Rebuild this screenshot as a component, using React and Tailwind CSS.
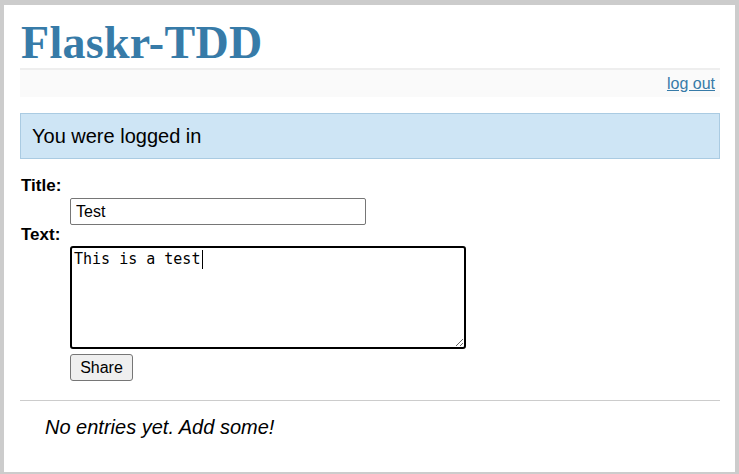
import { useState } from "react";

export default function App() {
  const [title, setTitle] = useState("Test");
  const [text, setText] = useState("This is a test");

  return (
    <div className="h-[474px] w-[739px] overflow-hidden border-t-[5px] border-r-4 border-b-2 border-l-4 border-[#ccc] bg-white pt-[13px] pr-[15px] pl-4 font-['Liberation_Sans',Arial,sans-serif] text-black">
      <h1 className="h-[52px] border-b-2 border-[#eee] pl-px font-['Liberation_Serif',Georgia,serif] text-[46px] leading-[50px] font-bold tracking-[0.3px] text-[#377ba8]">
        Flaskr-TDD
      </h1>
      <div className="flex h-[27px] items-center justify-end bg-[#fafafa] pr-[5px] text-base">
        <a href="#" className="text-[#377ba8] underline">
          log out
        </a>
      </div>

      <div className="mt-4 flex h-[46px] items-center border border-[#aacbe2] bg-[#cee5f5] px-[11px] text-[20px]">
        You were logged in
      </div>

      <form className="mt-[17px]" onSubmit={(e) => e.preventDefault()}>
        <dl>
          <dt className="h-5 pl-px text-[17px] leading-5 font-bold">Title:</dt>
          <dd className="mt-[2px] ml-[50px]">
            <input
              type="text"
              value={title}
              onChange={(e) => setTitle(e.target.value)}
              className="block h-[27px] w-[296px] rounded-[2px] border border-[#767676] px-[5px] text-base outline-none"
            />
          </dd>
          <dt className="h-5 pl-px text-[17px] leading-5 font-bold">Text:</dt>
          <dd className="relative mt-px ml-[50px] w-[396px]">
            <textarea
              value={text}
              onChange={(e) => setText(e.target.value)}
              className="block h-[103px] w-[396px] rounded-[3px] border-2 border-black p-[2px] font-['DejaVu_Sans_Mono',monospace] text-[15px] leading-[18px] outline-none"
            />
            <span className="absolute top-[4px] left-[132px] h-[19px] w-px bg-black" />
          </dd>
          <dd className="mt-[5px] ml-[50px]">
            <button
              type="submit"
              className="h-[27px] w-[63px] rounded-[3px] border border-[#767676] bg-[#efefef] text-base"
            >
              Share
            </button>
          </dd>
        </dl>
      </form>

      <hr className="mt-[19px] border-t border-[#ccc]" />
      <ul className="mt-[15px] pl-[25px]">
        <li className="text-[20px] leading-[23px] italic">No entries yet. Add some!</li>
      </ul>
    </div>
  );
}
